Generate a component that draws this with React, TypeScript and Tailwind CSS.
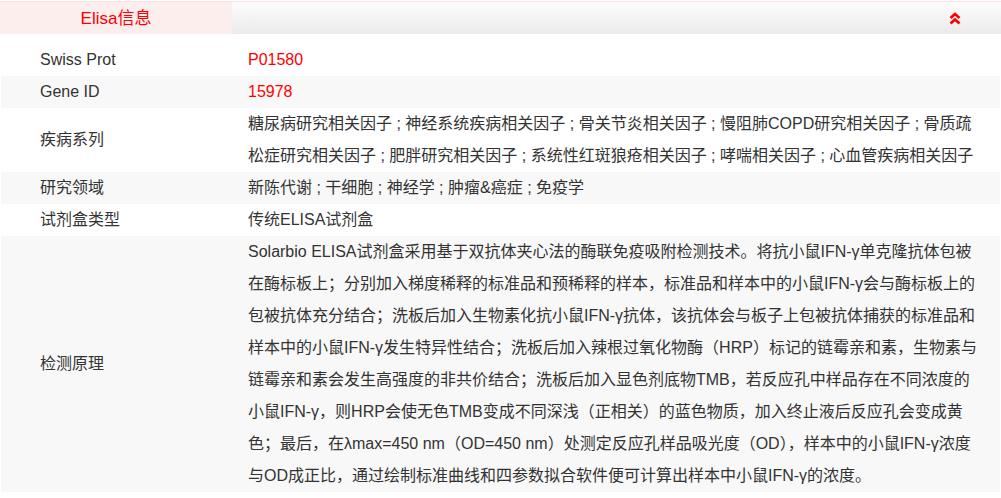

const rows: { label: string; value: string; red?: boolean }[] = [
  { label: 'Swiss Prot', value: 'P01580', red: true },
  { label: 'Gene ID', value: '15978', red: true },
  {
    label: '疾病系列',
    value:
      '糖尿病研究相关因子 ; 神经系统疾病相关因子 ; 骨关节炎相关因子 ; 慢阻肺COPD研究相关因子 ; 骨质疏松症研究相关因子 ; 肥胖研究相关因子 ; 系统性红斑狼疮相关因子 ; 哮喘相关因子 ; 心血管疾病相关因子',
  },
  { label: '研究领域', value: '新陈代谢 ; 干细胞 ; 神经学 ; 肿瘤&癌症 ; 免疫学' },
  { label: '试剂盒类型', value: '传统ELISA试剂盒' },
  {
    label: '检测原理',
    value:
      'Solarbio ELISA试剂盒采用基于双抗体夹心法的酶联免疫吸附检测技术。将抗小鼠IFN-γ单克隆抗体包被在酶标板上；分别加入梯度稀释的标准品和预稀释的样本，标准品和样本中的小鼠IFN-γ会与酶标板上的包被抗体充分结合；洗板后加入生物素化抗小鼠IFN-γ抗体，该抗体会与板子上包被抗体捕获的标准品和样本中的小鼠IFN-γ发生特异性结合；洗板后加入辣根过氧化物酶（HRP）标记的链霉亲和素，生物素与链霉亲和素会发生高强度的非共价结合；洗板后加入显色剂底物TMB，若反应孔中样品存在不同浓度的小鼠IFN-γ，则HRP会使无色TMB变成不同深浅（正相关）的蓝色物质，加入终止液后反应孔会变成黄色；最后，在λmax=450 nm（OD=450 nm）处测定反应孔样品吸光度（OD），样本中的小鼠IFN-γ浓度与OD成正比，通过绘制标准曲线和四参数拟合软件便可计算出样本中小鼠IFN-γ的浓度。',
  },
];

function ChevronsUp() {
  return (
    <svg width="12" height="13" viewBox="0 0 12 13" fill="none">
      <path d="M1.5 6 L6 2 L10.5 6" stroke="#f00" strokeWidth="2.8" />
      <path d="M1.5 11.5 L6 7.5 L10.5 11.5" stroke="#f00" strokeWidth="2.8" />
    </svg>
  );
}

export default function App() {
  return (
    <div
      className="w-[1001px] h-[498px] bg-white text-[#333] text-[16px] leading-[32px]"
      style={{ fontFamily: '"Liberation Sans", "Noto Sans CJK SC", sans-serif' }}
    >
      {/* Header */}
      <div className="mt-px border-t border-[#f8e2e2] flex h-[33px]">
        <div className="w-[232px] bg-[#fdeeee] text-center text-[17px] leading-[34px] text-[#f00]">
          Elisa信息
        </div>
        <div className="flex-1 flex items-center justify-end pr-[40px] bg-gradient-to-b from-[#fcfcfc] to-[#ebebeb]">
          <ChevronsUp />
        </div>
      </div>

      {/* Table */}
      <div className="mt-[10px]">
        {rows.map((row, i) => (
          <div
            key={row.label}
            className={`flex items-center mx-px ${i % 2 === 1 ? 'bg-[#f8f8f8]' : 'bg-white'}`}
          >
            <div className="w-[247px] pl-[39px] shrink-0">{row.label}</div>
            <div className={`w-[732px] ${row.red ? 'text-[#f00]' : ''}`}>{row.value}</div>
          </div>
        ))}
      </div>
    </div>
  );
}
